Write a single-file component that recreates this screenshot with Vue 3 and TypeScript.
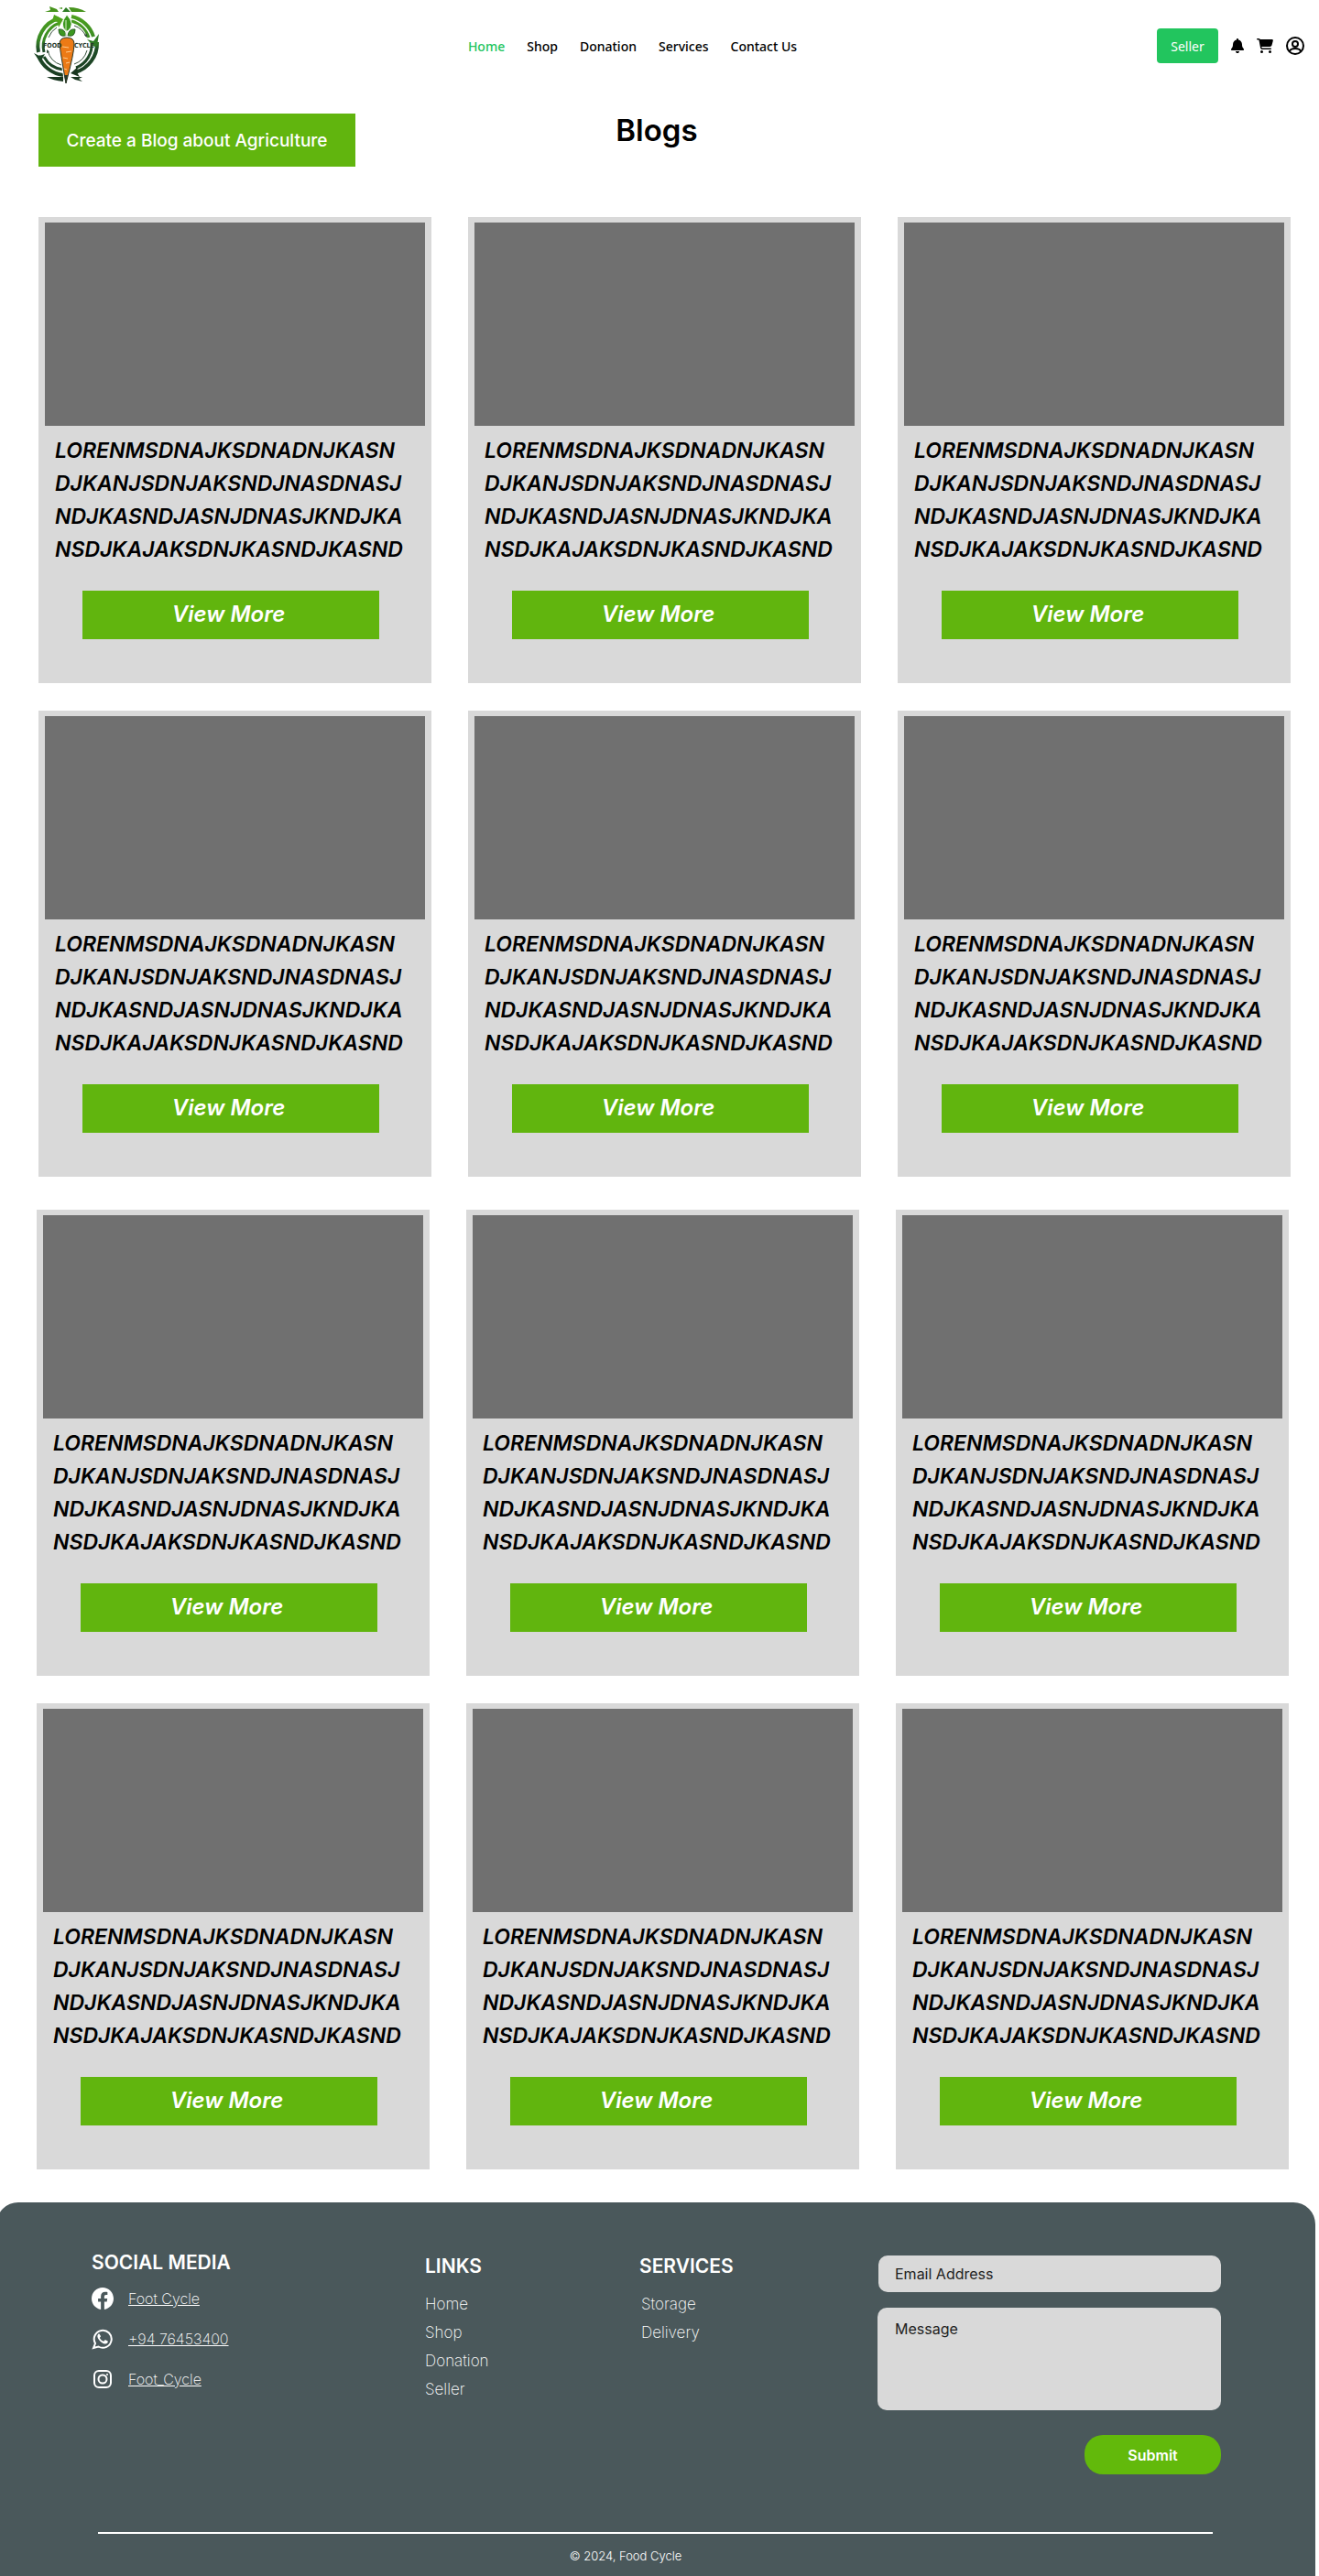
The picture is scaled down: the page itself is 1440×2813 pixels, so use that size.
<script setup lang="ts">
import { ref } from 'vue'

interface NavItem {
  label: string
  href: string
}

const navItems: NavItem[] = [
  { label: 'Home', href: '#home' },
  { label: 'Shop', href: '#shop' },
  { label: 'Donation', href: '#donation' },
  { label: 'Services', href: '#services' },
  { label: 'Contact Us', href: '#contact' },
]

const excerpt: string[] = [
  'LORENMSDNAJKSDNADNJKASN',
  'DJKANJSDNJAKSNDJNASDNASJ',
  'NDJKASNDJASNJDNASJKNDJKA',
  'NSDJKAJAKSDNJKASNDJKASND',
]

const groups: number[][] = [
  [1, 2, 3, 4, 5, 6],
  [7, 8, 9, 10, 11, 12],
]

const footerLinks: string[] = ['Home', 'Shop', 'Donation', 'Seller']
const footerServices: string[] = ['Storage', 'Delivery']

const email = ref('')
const message = ref('')
</script>

<template>
  <div class="page">
    <header class="header">
      <a href="#home" class="logo" aria-label="Food Cycle home">
        <svg viewBox="0 0 81 88" width="81" height="88">
          <defs>
            <linearGradient id="ring" x1="0" y1="0" x2="0" y2="88" gradientUnits="userSpaceOnUse">
              <stop offset="0" stop-color="#55aa1c" />
              <stop offset="0.42" stop-color="#3a8a25" />
              <stop offset="0.55" stop-color="#1f4d28" />
              <stop offset="1" stop-color="#18351f" />
            </linearGradient>
          </defs>
          <g fill="#47941d">
            <path d="M17 1l8 3 2 3H12l6-2z" />
            <path d="M27 3l4-1v2z" />
            <path d="M38 2q11 0 19 5H41z" />
          </g>
          <path d="M35 2l5 5h-9z" fill="#2e7d25" />
          <g fill="none" stroke="url(#ring)">
            <path d="M5 51A32 32 0 0 1 27 14" stroke-width="4" />
            <path d="M11 51A27 27 0 0 1 28 19" stroke-width="3" />
            <path d="M41 12A32 32 0 0 1 65 34" stroke-width="4" />
            <path d="M41 17A27 27 0 0 1 60 35" stroke-width="3" />
            <path d="M69 40A33 33 0 0 1 45 73" stroke-width="4" />
            <path d="M63 40A27 27 0 0 1 46 68" stroke-width="3" />
            <path d="M32 76A33 33 0 0 1 5 55" stroke-width="4" />
            <path d="M32 70A27 27 0 0 1 11 56" stroke-width="3" />
          </g>
          <path d="M22 10l10 5-5 9-1-6-6-1z" fill="#4fa31c" />
          <path d="M58 37l7 2 6-8-2 13-3 1z" fill="#2f7a25" />
          <path d="M0 52l6 3 6-2-5 9z" fill="#1d4526" />
          <path d="M48 67l-8 7 10 4-3-5z" fill="#18351f" />
          <g fill="none" stroke="#36513c" stroke-width="1">
            <path d="M16 35A22 22 0 0 1 25 24" />
            <path d="M44 22A22 22 0 0 1 57 34" />
            <path d="M58 49A22 22 0 0 1 44 64" />
            <path d="M30 65A22 22 0 0 1 15 49" />
          </g>
          <path d="M55 32l3 3V31zM14 52l0-4 3 3z" fill="#36513c" />
          <path d="M14 78h18v5q-11-1-18-5z" fill="#18351f" />
          <path d="M40 78h13l-4 2 4 3-8-2z" fill="#18351f" />
          <path d="M36 10q-9 11-1 18h2q9-7-1-18z" fill="#3c971f" stroke="#fff" stroke-width="1" />
          <path d="M27 26q7-1 8 7-8 2-8-7zM45 26q-7-1-8 7 8 2 8-7z" fill="#3c971f" stroke="#295e24" stroke-width="1" />
          <path d="M35 16v18" stroke="#d9efc9" stroke-width="1" />
          <path d="M28 42q0-7 8-7t8 7q0 10-9 43-6-33-7-43z" fill="#ec7a15" stroke="#fff" stroke-width="3" />
          <path d="M28 42q0-7 8-7t8 7q0 10-9 43-6-33-7-43z" fill="#ec7a15" stroke="#26382a" stroke-width="1" />
          <path d="M31 45l7 1M35 51l6-1M32 57l5 1M35 63l4-1M33 69l3 1" stroke="#ffc98a" stroke-width="1" />
          <path d="M33 76h4l-2 9z" fill="#26382a" />
          <text x="10" y="46" class="logo-text">FOOD</text>
          <text x="44" y="46" class="logo-text">CYCLE</text>
        </svg>
      </a>

      <nav class="nav" aria-label="Main">
        <a
          v-for="(item, i) in navItems"
          :key="item.label"
          :href="item.href"
          :class="['nav-link', { active: i === 0 }]"
        >{{ item.label }}</a>
      </nav>

      <div class="actions">
        <button type="button" class="seller">Seller</button>
        <button type="button" class="icon-button bell" aria-label="Notifications">
          <svg viewBox="0 0 448 512" width="14" height="16">
            <path d="M224 0c-17.700 0-32 14.300-32 32v19.200C119 66 64 130.600 64 208v18.800c0 47-17.300 92.400-48.500 127.600l-7.400 8.300c-8.400 9.400-10.400 22.900-5.300 34.400S19.400 416 32 416h384c12.600 0 24-7.400 29.200-18.900s3.100-25-5.300-34.400l-7.400-8.300C401.300 319.200 384 273.900 384 226.800V208c0-77.400-55-142-128-156.800V32c0-17.700-14.300-32-32-32zm45.300 493.300c12-12 18.700-28.300 18.700-45.300H160c0 17 6.700 33.300 18.700 45.300s28.300 18.700 45.300 18.700 33.300-6.700 45.300-18.700z" />
          </svg>
        </button>
        <button type="button" class="icon-button" aria-label="Cart">
          <svg viewBox="0 0 576 512" width="18" height="16">
            <path d="M0 24C0 10.700 10.700 0 24 0h45.500c22 0 41.500 12.800 50.600 32h411c26.300 0 45.500 25 38.600 50.400l-41 152.300c-8.500 31.400-37 53.300-69.500 53.300H170.700l5.400 28.500c2.200 11.300 12.100 19.500 23.600 19.500H488c13.300 0 24 10.700 24 24s-10.700 24-24 24H199.700c-34.600 0-64.300-24.600-70.700-58.500L77.400 54.500c-.7-3.800-4-6.500-7.900-6.500H24C10.700 48 0 37.300 0 24zm128 440a48 48 0 1 1 96 0 48 48 0 1 1-96 0zm336-48a48 48 0 1 1 0 96 48 48 0 1 1 0-96z" />
          </svg>
        </button>
        <button type="button" class="icon-button" aria-label="Account">
          <svg viewBox="0 0 20 20" width="20" height="20" fill="none" stroke="#000" stroke-width="2">
            <circle cx="10" cy="10" r="9" />
            <circle cx="10" cy="8" r="3" />
            <path d="M4 16q1-3 6-3t6 3" />
          </svg>
        </button>
      </div>
    </header>

    <main>
      <div class="title-bar">
        <button type="button" class="create">Create a Blog about Agriculture</button>
        <h1>Blogs</h1>
      </div>

      <section v-for="(group, g) in groups" :key="g" :class="['blogs', { shifted: g === 1 }]">
        <article v-for="id in group" :key="id" class="card">
          <div class="cover"></div>
          <p class="excerpt">
            <span v-for="line in excerpt" :key="line">{{ line }}</span>
          </p>
          <button type="button" class="view-more">View More</button>
        </article>
      </section>
    </main>

    <footer class="footer">
      <div class="columns">
        <section class="social">
          <h2>SOCIAL MEDIA</h2>
          <ul>
            <li>
              <svg viewBox="0 0 24 24" width="24" height="24">
                <path fill="#fff" d="M24 12.070C24 5.400 18.630 0 12 0S0 5.400 0 12.070C0 18.100 4.390 23.100 10.130 24v-8.440H7.080v-3.490h3.050V9.410c0-3.020 1.790-4.690 4.530-4.690 1.310 0 2.680.24 2.680.24v2.970h-1.510c-1.490 0-1.960.93-1.960 1.890v2.250h3.330l-.53 3.490h-2.800V24C19.610 23.100 24 18.100 24 12.070z" />
              </svg>
              <a href="#facebook">Foot Cycle</a>
            </li>
            <li>
              <svg viewBox="0 0 24 24" width="24" height="24">
                <path fill="none" stroke="#fff" stroke-width="2" d="M2 22l2-5a9.500 9.500 0 1 1 3.500 3.500z" />
                <path fill="#fff" d="M8.600 6.800c-.3-.5-.9-.5-1.300 0-1.700 1.700-1 4 .9 6.400 2 2.600 4.400 4.200 6.700 4.200 1.700 0 2.900-1.100 2.900-2.500 0-.4-.2-.5-.6-.7l-2-.9c-.4-.2-.6-.1-.9.2l-.8 1c-.2.300-.5.300-.9.100-1.600-.7-2.800-1.800-3.600-3.300-.2-.3-.1-.5.100-.8l.7-.8c.2-.3.200-.5.100-.8z" />
              </svg>
              <a href="#whatsapp">+94 76453400</a>
            </li>
            <li>
              <svg viewBox="0 0 24 24" width="24" height="24" fill="none" stroke="#fff" stroke-width="2">
                <rect x="3" y="3" width="18" height="18" rx="5" />
                <circle cx="12" cy="12" r="4.500" />
                <circle cx="17" cy="7" r="1" fill="#fff" stroke="none" />
              </svg>
              <a href="#instagram">Foot_Cycle</a>
            </li>
          </ul>
        </section>

        <section class="link-list">
          <h2>LINKS</h2>
          <ul>
            <li v-for="link in footerLinks" :key="link"><a :href="'#' + link.toLowerCase()">{{ link }}</a></li>
          </ul>
        </section>

        <section class="link-list services">
          <h2>SERVICES</h2>
          <ul>
            <li v-for="service in footerServices" :key="service"><a :href="'#' + service.toLowerCase()">{{ service }}</a></li>
          </ul>
        </section>

        <form class="contact" @submit.prevent>
          <input v-model="email" type="email" aria-label="Email Address" placeholder="Email Address" />
          <textarea v-model="message" aria-label="Message" placeholder="Message"></textarea>
          <button type="submit">Submit</button>
        </form>
      </div>
      <hr />
      <p class="copyright">© 2024, Food Cycle</p>
    </footer>
  </div>
</template>

<style>
body {
  margin: 0;
  background: #fff;
}
</style>

<style scoped>
.page {
  font-family: Inter, "Liberation Sans", sans-serif;
  color: #000;
  overflow-x: hidden;
}

h1,
h2,
p,
ul {
  margin: 0;
  padding: 0;
}

ul {
  list-style: none;
}

a {
  color: inherit;
  text-decoration: none;
}

button {
  border: 0;
  padding: 0;
  font-family: inherit;
  color: #fff;
  cursor: pointer;
}

svg {
  display: block;
}

.header {
  display: flex;
  align-items: center;
  justify-content: space-between;
  height: 100px;
  padding: 0 16px 0 37px;
  font-family: "Noto Sans", "Open Sans", sans-serif;
}

.logo-text {
  font: bold 7px "Liberation Sans Narrow", "DejaVu Sans Condensed", sans-serif;
  fill: #26382a;
}

.nav {
  display: flex;
  gap: 24px;
  padding-top: 2px;
}

.nav-link {
  font-size: 14px;
  font-weight: 500;
  line-height: 24px;
}

.nav-link.active {
  color: #22c55e;
}

.actions {
  display: flex;
  align-items: center;
  gap: 14px;
}

.seller {
  width: 67px;
  height: 38px;
  border-radius: 4px;
  background: #22c55e;
  font-size: 14px;
}

.icon-button {
  background: none;
}

.title-bar {
  display: grid;
  grid-template-columns: 1fr auto 1fr;
  align-items: start;
  padding: 24px 48px 0 42px;
}

.create {
  justify-self: start;
  width: 346px;
  height: 58px;
  background: #61b50e;
  font-size: 19px;
  font-weight: 500;
}

h1 {
  font-size: 33px;
  font-weight: 600;
  line-height: 36px;
}

.blogs {
  display: grid;
  grid-template-columns: repeat(3, 1fr);
  gap: 30px 40px;
  margin: 55px 31px 36px 42px;
}

.blogs.shifted {
  margin: 0 33px 36px 40px;
}

.card {
  display: flex;
  flex-direction: column;
  padding: 6px 7px 48px;
  background: #d9d9d9;
}

.cover {
  height: 222px;
  background: #707070;
}

.excerpt {
  padding: 9px 0 27px 11px;
  font-size: 23px;
  font-style: italic;
  font-weight: 600;
  line-height: 36px;
}

.excerpt span {
  display: block;
  white-space: nowrap;
}

.view-more {
  height: 53px;
  margin: 0 50px 0 41px;
  padding: 0 5px 2px 0;
  background: #61b50e;
  font-size: 24px;
  font-style: italic;
  font-weight: 600;
}

.footer {
  margin: 0 4px 0 -4px;
  border-radius: 24px 24px 0 0;
  background: #4a585b;
  color: #fff;
}

.columns {
  display: grid;
  grid-template-columns: 364fr 234fr 260fr 375fr;
  padding: 52px 103px 63px 104px;
}

h2 {
  font-size: 21px;
  font-weight: 600;
  line-height: 28px;
}

.social ul {
  display: grid;
  gap: 20px;
  margin-top: 13px;
}

.social li {
  display: flex;
  align-items: center;
  gap: 16px;
}

.footer li {
  font-size: 16px;
  font-weight: 200;
  line-height: 24px;
}

.social a {
  text-decoration: underline;
}

.link-list h2 {
  margin-top: 4px;
}

.link-list ul {
  display: grid;
  gap: 7px;
  margin-top: 15px;
}

.link-list li {
  font-size: 17px;
}

.services ul {
  padding-left: 2px;
}

.contact {
  display: flex;
  flex-direction: column;
  margin-top: 6px;
}

.contact input,
.contact textarea {
  box-sizing: border-box;
  border: 0;
  border-radius: 10px;
  background: #d9d9d9;
  color: #222;
  font-family: inherit;
  font-size: 16px;
  line-height: 24px;
}

.contact input {
  height: 40px;
  margin-left: 1px;
  padding: 0 18px;
}

.contact textarea {
  height: 112px;
  margin-top: 17px;
  padding: 11px 19px;
  resize: none;
}

.contact ::placeholder {
  color: #222;
  opacity: 1;
}

.contact button {
  align-self: flex-end;
  width: 149px;
  height: 43px;
  margin-top: 27px;
  border-radius: 20px;
  background: #62b90b;
  font-size: 16px;
  font-weight: 600;
}

hr {
  height: 2px;
  margin: 0 112px 0 111px;
  border: 0;
  background: #fff;
}

.copyright {
  padding: 12px 66px 10px 0;
  font-size: 13px;
  font-weight: 300;
  line-height: 24px;
  text-align: center;
}
</style>
